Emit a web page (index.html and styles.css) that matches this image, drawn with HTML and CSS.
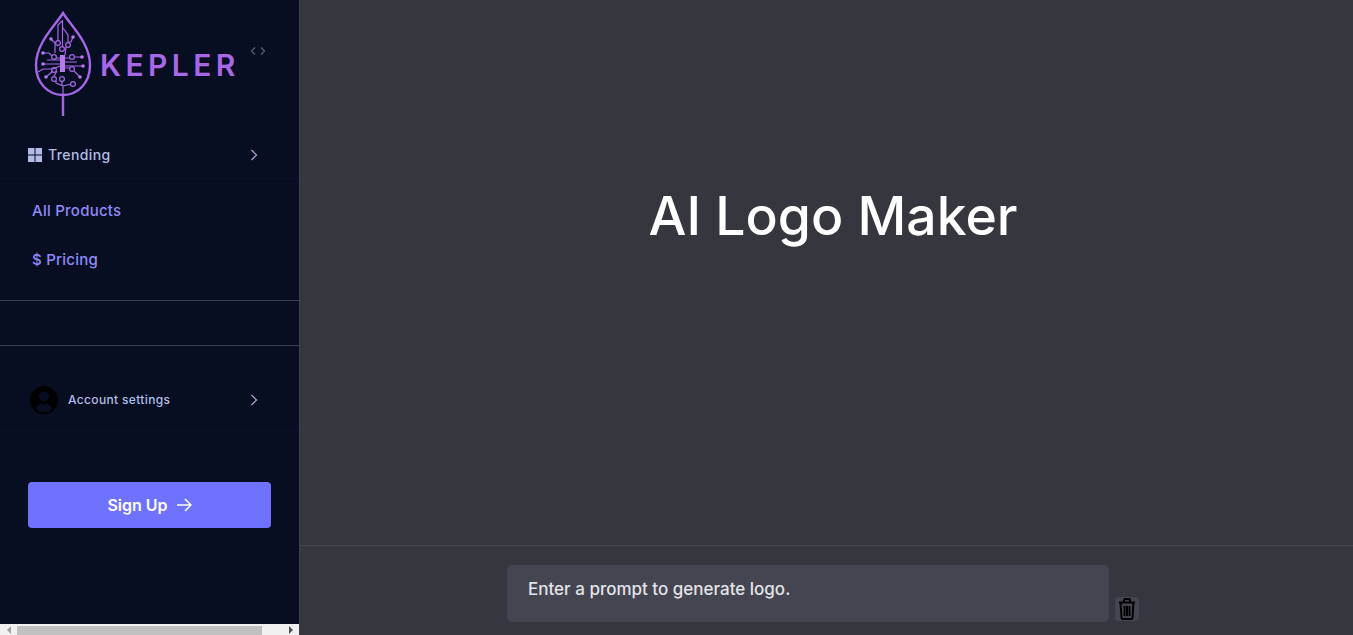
FILE: index.html
```html
<!DOCTYPE html>
<html>
<head>
  <title>Kepler - AI Logo Maker</title>
  <link rel="stylesheet" href="styles.css">
</head>
<body>
  <div class="sidebar">
    <div class="brand">
      <svg class="leaf" viewBox="33 10 60 110" width="60" height="110" fill="none" stroke="#a465e6">
        <path stroke-width="2.4" d="M63 13C55 26 36 43 36 65C36 83 48 95 63 95C78 95 90 83 90 65C90 43 71 26 63 13ZM63 95V116"/>
        <g stroke-width="1.2">
          <path d="M62.500 20V47M58 41V25L62 21M63 28L68 35V43M73 37L71 42H69M51 39L55 43V53"/>
          <path d="M43 53H49L52 56M43 64H60M47 60H60M46 77L53 71M38 72L43 69H53L60 66M60 58H56"/>
          <path d="M82 57H74M83 66H65M65 62H77M80 77L74 71M65 68H70M65 58H70M65 55L66 47"/>
          <path d="M63 95V86L56 83V81M63 86L71 84M62 86V81M54 76L57 71"/>
          <circle cx="58" cy="43" r="2.400"/><circle cx="68" cy="45" r="2.400"/><circle cx="62" cy="49" r="2.400"/>
          <circle cx="54" cy="57" r="2.400"/><circle cx="72" cy="57" r="2.400"/><circle cx="54" cy="70" r="2.400"/>
          <circle cx="72" cy="69" r="2.400"/><circle cx="54" cy="79" r="2.400"/><circle cx="62" cy="79" r="2.400"/>
          <circle cx="73" cy="84" r="2.400"/>
        </g>
        <g fill="#b678f0" stroke="none">
          <rect x="60" y="55" width="5" height="17"/>
          <circle cx="51" cy="39" r="1.800"/><circle cx="43" cy="53" r="1.800"/><circle cx="43" cy="64" r="1.800"/>
          <circle cx="46" cy="77" r="1.800"/><circle cx="82" cy="57" r="1.800"/><circle cx="83" cy="66" r="1.800"/>
          <circle cx="80" cy="77" r="1.800"/><circle cx="73" cy="37" r="1.800"/>
        </g>
      </svg>
      <span class="brand-name">KEPLER</span>
      <svg class="collapse" viewBox="0 0 16 10" width="16" height="10" fill="none" stroke="#5b6072" stroke-width="1.2">
        <path d="M5 1.500L1.500 5L5 8.500M11 1.500L14.500 5L11 8.500"/>
      </svg>
    </div>

    <div class="row trending">
      <svg class="grid-icon" viewBox="0 0 14 14" width="14" height="14" fill="#b3bce6">
        <rect width="6.500" height="6.500"/><rect x="7.500" width="6.500" height="6.500"/>
        <rect y="7.500" width="6.500" height="6.500"/><rect x="7.500" y="7.500" width="6.500" height="6.500"/>
      </svg>
      <span class="row-label">Trending</span>
      <svg class="chev" viewBox="0 0 8 12" width="8" height="12" fill="none" stroke="#aab3dc" stroke-width="1.2"><path d="M1.500 1L6.500 6L1.500 11"/></svg>
    </div>

    <nav class="links">
      <a href="#">All Products</a>
      <a href="#">$ Pricing</a>
    </nav>

    <div class="spacer"></div>

    <div class="row account">
      <svg class="avatar" viewBox="0 0 28 28" width="28" height="28">
        <circle cx="14" cy="14" r="14" fill="#000"/>
        <circle cx="14" cy="10.500" r="5" fill="#080e22"/>
        <path d="M6 23C7 18.500 10 17.500 14 17.500C18 17.500 21 18.500 22 23C20 25.500 17 26.500 14 26.500C11 26.500 8 25.500 6 23Z" fill="#080e22"/>
      </svg>
      <span class="account-label">Account settings</span>
      <svg class="chev" viewBox="0 0 8 12" width="8" height="12" fill="none" stroke="#aab3dc" stroke-width="1.2"><path d="M1.500 1L6.500 6L1.500 11"/></svg>
    </div>

    <button class="signup" type="button">
      Sign Up
      <svg viewBox="0 0 16 14" width="16" height="14" fill="none" stroke="#fff" stroke-width="1.5"><path d="M1 7H15M9 1L15 7L9 13"/></svg>
    </button>

    <div class="hscroll">
      <span class="arrow left"></span>
      <div class="track"><div class="thumb"></div></div>
      <span class="arrow right"></span>
    </div>
  </div>

  <div class="main">
    <div class="stage">
      <h1>AI Logo Maker</h1>
    </div>
    <div class="composer">
      <div class="prompt">Enter a prompt to generate logo.</div>
      <button class="trash" type="button">
        <svg viewBox="0 0 18 22" width="18" height="22" fill="none" stroke="#000" stroke-width="1.900">
          <path d="M1 4.500H17M6 4V2C6 1.500 6.500 1 7 1H11C11.500 1 12 1.500 12 2V4"/>
          <path d="M2.500 5L3.500 20C3.500 20.500 4 21 4.500 21H13.500C14 21 14.500 20.500 14.500 20L15.500 5"/>
          <path d="M6.500 8V18M9 8V18M11.500 8V18"/>
        </svg>
      </button>
    </div>
  </div>
</body>
</html>
```

FILE: styles.css
```css
* {
  box-sizing: border-box;
}

html, body {
  height: 100%;
}

body {
  font-family: Inter, "Open Sans", sans-serif;
  margin: 0;
  display: flex;
  height: 635px;
  overflow: hidden;
  background-color: #36363f;
}

.sidebar {
  width: 300px;
  flex-shrink: 0;
  display: flex;
  flex-direction: column;
  background-color: #080e22;
  border-right: 1px solid #3a3f52;
}

.brand {
  display: flex;
  align-items: flex-start;
  height: 131px;
  padding: 10px 0 0 33px;
}

.brand-name {
  margin: 37px 0 0 7px;
  font-size: 30px;
  line-height: 36px;
  font-weight: 600;
  letter-spacing: 4.4px;
  color: #a768e8;
}

.collapse {
  margin: 36px 0 0 10px;
}

.row {
  display: flex;
  align-items: center;
}

.trending {
  height: 48px;
  padding: 0 41px 0 28px;
  border-bottom: 1px solid #0b1128;
}

.row-label {
  margin-left: 6px;
  font-size: 14px;
  font-weight: 500;
  letter-spacing: 0.4px;
  color: #b3bce6;
}

.chev {
  margin-left: auto;
}

.links {
  display: flex;
  flex-direction: column;
  gap: 25px;
  padding: 20px 0 0 32px;
  height: 122px;
  border-bottom: 1px solid #3a3f52;
}

.links a {
  font-size: 15px;
  line-height: 24px;
  font-weight: 500;
  letter-spacing: 0.25px;
  color: #8f89f7;
  text-decoration: none;
}

.spacer {
  height: 45px;
  border-bottom: 1px solid #3a3f52;
}

.account {
  height: 85px;
  padding: 23px 41px 0 30px;
  border-bottom: 1px solid #0a1027;
}

.avatar {
  flex-shrink: 0;
}

.account-label {
  margin-left: 10px;
  font-size: 12px;
  font-weight: 500;
  letter-spacing: 0.35px;
  color: #b3bce6;
}

.signup {
  display: flex;
  align-items: center;
  justify-content: center;
  gap: 8px;
  width: 243px;
  height: 46px;
  margin: 51px 0 0 28px;
  border: none;
  border-radius: 4px;
  background-color: #6e72ff;
  color: #fff;
  font-family: inherit;
  font-size: 16px;
  font-weight: 600;
}

.hscroll {
  display: flex;
  align-items: center;
  height: 11px;
  margin-top: auto;
  background-color: #f1f1f1;
}

.arrow {
  width: 17px;
  display: flex;
  justify-content: center;
}

.arrow::before {
  content: "";
  border-top: 4px solid transparent;
  border-bottom: 4px solid transparent;
}

.arrow.left::before {
  border-right: 4px solid #a3a3a3;
}

.arrow.right::before {
  border-left: 4px solid #505050;
}

.track {
  flex: 1;
  height: 100%;
  padding-top: 2px;
}

.thumb {
  width: 245px;
  height: 9px;
  background-color: #c1c1c1;
}

.main {
  flex: 1;
  display: flex;
  flex-direction: column;
  min-width: 0;
}

.stage {
  height: 546px;
  border-bottom: 1px solid #45454f;
  text-align: center;
  padding: 177px 0 0 13px;
}

h1 {
  margin: 0;
  font-size: 53.5px;
  line-height: 78px;
  font-weight: 500;
  color: #fff;
}

.composer {
  display: flex;
  align-items: flex-end;
  gap: 6px;
  padding: 19px 0 0 207px;
}

.prompt {
  width: 602px;
  height: 57px;
  padding: 13px 21px;
  border-radius: 5px;
  background-color: #444551;
  color: #e3e3e8;
  font-size: 17px;
  line-height: 22px;
  font-weight: 500;
}

.trash {
  display: flex;
  align-items: center;
  justify-content: center;
  width: 24px;
  height: 24px;
  margin-bottom: 1px;
  padding: 0;
  border: none;
  border-radius: 4px;
  background-color: #444551;
}
```
